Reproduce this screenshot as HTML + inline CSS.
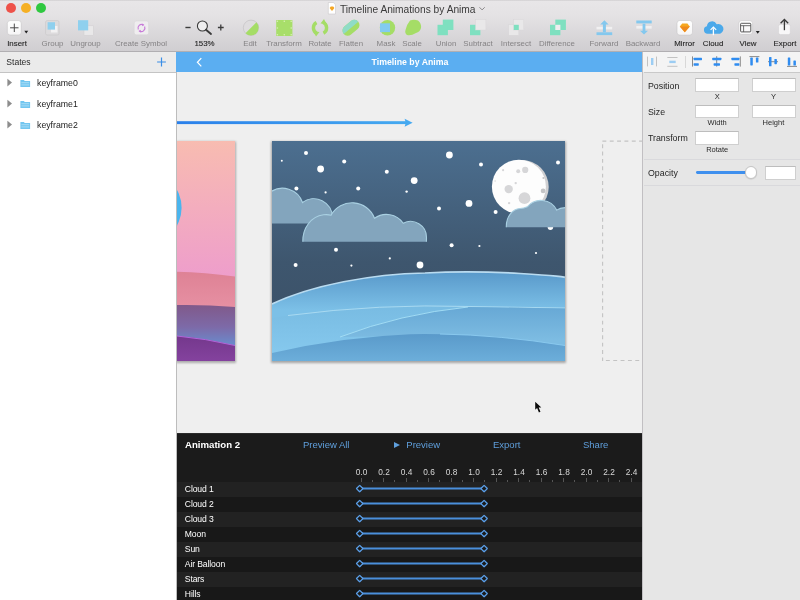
<!DOCTYPE html>
<html lang="en">
<head>
<meta charset="utf-8">
<title>Timeline Animations by Anima</title>
<style>
*{box-sizing:border-box;margin:0;padding:0}
html,body{width:800px;height:600px;overflow:hidden;background:#ececec;font-family:"Liberation Sans",sans-serif;color:#222}
.abs{position:absolute}
#app{position:relative;width:800px;height:600px;overflow:hidden;will-change:transform}
/* toolbar */
#toolbar{position:absolute;left:0;top:0;width:800px;height:52px;background:linear-gradient(#cfcdcf 0,#e8e6e8 1.500px,#e4e2e4 16px,#d0ced1 100%);border-bottom:1px solid #b1afb2}
.tl{position:absolute;top:3.200px;width:10px;height:10px;border-radius:50%}
.tbl{position:absolute;top:37.5px;font-size:7.9px;line-height:12px;color:#858385;white-space:nowrap;transform:translateX(-50%);letter-spacing:0}
.tbl.dk{color:#262626;-webkit-text-stroke:.12px #262626}
#title{position:absolute;top:2.5px;left:340px;font-size:10.2px;line-height:14px;color:#3a3a3a;white-space:nowrap}
/* sidebar */
#side{position:absolute;left:0;top:52px;width:177px;height:548px;background:#fff;border-right:1px solid #bdbdbd}
#sidehead{position:absolute;left:0;top:0;width:176px;height:21px;background:#ebebeb;border-bottom:1px solid #c4c4c4;font-size:8.6px;line-height:20px;padding-left:6.3px;color:#2a2a2a}
.kf{position:absolute;left:37px;font-size:8.75px;line-height:12px;color:#222}
/* canvas */
#canvas{position:absolute;left:177px;top:72px;width:465px;height:361px;z-index:2;background:#efefef;overflow:hidden}
#bluebar{position:absolute;left:176px;top:52px;width:466px;height:20px;background:#5baef1;color:#fff;font-size:8.75px;font-weight:bold;line-height:20px;text-align:center;padding-left:2px}
/* right */
#right{position:absolute;left:642px;top:52px;width:158px;height:548px;background:#e6e6e6;box-shadow:inset 1px 0 0 #c1bfc2}
.rl{position:absolute;left:6px;font-size:8.8px;line-height:12px;color:#1f1f1f}
.rs{position:absolute;font-size:7.5px;line-height:10px;color:#2a2a2a;transform:translateX(-50%)}
.inp{position:absolute;height:13.600px;background:#fff;border:1px solid #cfcfcf;border-top-color:#bdbdbd}
.hr{position:absolute;left:2px;width:158px;height:1px;background:#d9d9dc}
/* timeline */
#tl{position:absolute;left:177px;top:432px;width:465px;height:168px;background:#1b1b1b;overflow:hidden}
.tlb{position:absolute;top:7px;font-size:9.5px;line-height:12px;color:#5f9fdc;white-space:nowrap}
.row{position:absolute;left:0;width:465px;height:15px;font-size:8.6px;letter-spacing:-.12px;line-height:15px;color:#fff;padding-left:7.8px}
.row.a{background:#222}
.row.b{background:#181818}
.num{position:absolute;top:35px;font-size:8.3px;line-height:10px;color:#d8d8d8;transform:translateX(-50%)}
</style>
</head>
<body>
<div id="app">

<!-- TOOLBAR -->
<div id="toolbar">
  <div class="tl" style="left:5.5px;background:#ee5149"></div>
  <div class="tl" style="left:20.5px;background:#f5b025"></div>
  <div class="tl" style="left:35.5px;background:#2fc840"></div>
  <div id="title">Timeline Animations by Anima</div>
  <div class="tbl dk" style="left:17px;">Insert</div>
  <div class="tbl" style="left:52.5px">Group</div>
  <div class="tbl" style="left:85.5px">Ungroup</div>
  <div class="tbl" style="left:141px">Create Symbol</div>
  <div class="tbl dk" style="left:204.5px;">153%</div>
  <div class="tbl" style="left:250px">Edit</div>
  <div class="tbl" style="left:284px">Transform</div>
  <div class="tbl" style="left:320px">Rotate</div>
  <div class="tbl" style="left:351px">Flatten</div>
  <div class="tbl" style="left:386px">Mask</div>
  <div class="tbl" style="left:412px">Scale</div>
  <div class="tbl" style="left:446px">Union</div>
  <div class="tbl" style="left:478px">Subtract</div>
  <div class="tbl" style="left:516px">Intersect</div>
  <div class="tbl" style="left:557px">Difference</div>
  <div class="tbl" style="left:604px">Forward</div>
  <div class="tbl" style="left:643px">Backward</div>
  <div class="tbl dk" style="left:684.5px">Mirror</div>
  <div class="tbl dk" style="left:713px">Cloud</div>
  <div class="tbl dk" style="left:748px">View</div>
  <div class="tbl dk" style="left:785px">Export</div>
  <svg class="abs" style="left:0;top:0" width="800" height="52" viewBox="0 0 800 52">
<defs>
<linearGradient id="btn" x1="0" y1="0" x2="0" y2="1"><stop offset="0" stop-color="#ffffff"/><stop offset="1" stop-color="#f6f5f6"/></linearGradient>
</defs>
<!-- title doc icon + chevron -->
<path d="M328.300 2.500 h5 l2.200 2.200 v9.300 h-7.200 z" fill="#fff" stroke="#c9c7c9" stroke-width=".6"/>
<path d="M329.600 8 l1.200 -1.600 h2.400 l1.200 1.600 l-2.400 3 z" fill="#f5a623"/>
<path d="M479.500 7.300 l2.600 2.600 l2.600 -2.600" fill="none" stroke="#8a888a" stroke-width="1"/>
<!-- insert -->
<rect x="7.300" y="20.600" width="14" height="14.400" rx="2.800" fill="url(#btn)" stroke="#c4c2c4" stroke-width=".6"/>
<path d="M14.300 23.600 v8.400 M10.100 27.800 h8.400" stroke="#4a4a4a" stroke-width="1" fill="none"/>
<path d="M24.300 30.800 h3.900 l-1.950 2.800 z" fill="#222"/>
<!-- group -->
<rect x="45.600" y="20.600" width="13.400" height="14.400" rx="1.500" fill="#dddbdd" stroke="#c8c6c8" stroke-width=".6"/>
<rect x="51" y="26" width="6.500" height="6.500" fill="#f2f1f2"/>
<rect x="47.600" y="22.200" width="7.400" height="7.400" fill="#8fd0ee"/>
<!-- ungroup -->
<rect x="84" y="25.800" width="9.400" height="9.400" fill="#e9e8e9" stroke="#d0ced0" stroke-width=".5"/>
<rect x="78" y="20.200" width="10.200" height="10.200" fill="#8fd0ee"/>
<!-- create symbol -->
<rect x="134.200" y="21" width="14.400" height="13.800" rx="2" fill="#efedef" stroke="#d6d4d6" stroke-width=".5"/>
<path d="M138.300 29.500 a3.600 3.600 0 0 1 5 -4.600 M144.600 26.500 a3.600 3.600 0 0 1 -5 4.600" fill="none" stroke="#c77bd8" stroke-width="1.200"/>
<path d="M142.300 23.600 l2.200 1.500 l-2.300 1.200z M140.600 32.400 l-2.200 -1.500 l2.300 -1.200z" fill="#c77bd8"/>
<!-- zoom -->
<path d="M185.400 27.500 h5.200" stroke="#3c3c3c" stroke-width="1.400"/>
<circle cx="202.400" cy="26" r="5" fill="#efeeef" stroke="#3a3a3a" stroke-width="1.100"/>
<path d="M206 29.800 l5 4.200" stroke="#3a3a3a" stroke-width="1.900" stroke-linecap="round"/>
<path d="M217.900 27.500 h5.800 M220.800 24.600 v5.800" stroke="#3c3c3c" stroke-width="1.300"/>
<!-- edit -->
<circle cx="251" cy="27.800" r="7.700" fill="#dedcde" stroke="#c4c2c4" stroke-width=".7"/>
<path d="M256.400 22.300 A7.700 7.700 0 0 1 245.500 33.200 Z" fill="#a5dd66"/>
<!-- transform -->
<rect x="276.200" y="20" width="16.200" height="16" fill="#a8de6a"/>
<g fill="#d8f0b4"><circle cx="277.400" cy="21.200" r=".8"/><circle cx="284.300" cy="21.200" r=".8"/><circle cx="291.200" cy="21.200" r=".8"/><circle cx="277.400" cy="34.800" r=".8"/><circle cx="284.300" cy="34.800" r=".8"/><circle cx="291.200" cy="34.800" r=".8"/><circle cx="277.400" cy="28" r=".8"/><circle cx="291.200" cy="28" r=".8"/></g>
<!-- rotate -->
<path d="M316.500 22.500 A6.200 6.200 0 0 0 317 33.500" fill="none" stroke="#a5dd66" stroke-width="3.400"/>
<path d="M323.500 33.200 A6.200 6.200 0 0 0 323 22.200" fill="none" stroke="#a5dd66" stroke-width="3.400"/>
<path d="M313.500 31.500 l6 0.500 l-3.500 4.500z M326.500 24 l-6 -0.500 l3.500 -4.500z" fill="#a5dd66"/>
<!-- flatten -->
<g transform="rotate(-40 351 27.800)">
<rect x="341.500" y="22.600" width="19" height="10.400" rx="5.200" fill="#a5dd66"/>
<path d="M346.700 22.600 h8.600 a5.200 5.200 0 0 1 5.200 5.200 h-19 a5.200 5.200 0 0 1 5.200 -5.200z" fill="#8fdcc6"/>
</g>
<!-- mask -->
<circle cx="387.500" cy="27.800" r="7.700" fill="#a5dd66"/>
<rect x="380" y="23.300" width="10" height="8.800" fill="#82cbf0"/>
<!-- scale -->
<path d="M410 20.500 Q414 19 418 20.500 Q421.500 23 421 28 Q420 32 416 33 Q411 36 407 35 Q404.500 33 405.500 30 Q407 24 410 20.500z" fill="#a5dd66"/>
<!-- union -->
<rect x="442.800" y="19.600" width="10.600" height="10.400" fill="#7fe0c0"/><rect x="437.500" y="24.800" width="10.400" height="10.400" fill="#7fe0c0"/>
<!-- subtract -->
<rect x="470" y="24.800" width="10.400" height="10.400" fill="#7fe0c0"/><rect x="475.500" y="19.600" width="10.400" height="10.400" fill="#e9e8e9" stroke="#d6d4d6" stroke-width=".4"/>
<!-- intersect -->
<rect x="508.800" y="24.800" width="10" height="10.400" fill="#e9e8e9" stroke="#d6d4d6" stroke-width=".4"/><rect x="513.800" y="19.600" width="10" height="10.400" fill="#e9e8e9" stroke="#d6d4d6" stroke-width=".4"/><rect x="513.800" y="24.800" width="5" height="5.200" fill="#7fe0c0"/>
<!-- difference -->
<rect x="550" y="24.800" width="10.400" height="10.400" fill="#7fe0c0"/><rect x="555.300" y="19.600" width="10.600" height="10.400" fill="#7fe0c0"/><rect x="555.300" y="24.800" width="5.100" height="5.200" fill="#efeeef"/>
<!-- forward -->
<rect x="596.500" y="32.300" width="15.700" height="2.800" fill="#84c8ee"/>
<rect x="596.500" y="26.800" width="15.700" height="2.600" fill="#f1f0f1"/>
<path d="M604.400 20.300 l4.200 4.200 h-2.700 v7.800 h-3 v-7.800 h-2.700z" fill="#84c8ee"/>
<!-- backward -->
<rect x="636.300" y="20.500" width="15.400" height="2.900" fill="#84c8ee"/>
<rect x="636.300" y="26" width="15.400" height="2.600" fill="#f1f0f1"/>
<path d="M644 34.600 l4 -3.800 h-2.600 v-7 h-2.800 v7 h-2.600z" fill="#84c8ee"/>
<!-- mirror -->
<rect x="677" y="20.500" width="15.500" height="14.600" rx="2.800" fill="url(#btn)" stroke="#c8c6c8" stroke-width=".6"/>
<path d="M679.800 26.500 l2.400 -3 h5.200 l2.400 3 l-5 5.800z" fill="#f6a820"/>
<path d="M679.800 26.500 h10 l-5 5.800z" fill="#ee8a1e"/>
<!-- cloud -->
<path d="M707.500 33.700 a3.800 3.800 0 0 1 -0.600 -7.500 a5.200 5.200 0 0 1 9.800 -2 a4.800 4.800 0 0 1 3.400 9.500z" fill="#4ba9ea"/>
<path d="M713.400 35.200 v-7" stroke="#fff" stroke-width="1.300"/>
<path d="M710.600 29.800 l2.800 -2.800 l2.800 2.800" stroke="#fff" stroke-width="1.200" fill="none"/>
<!-- view -->
<rect x="738.800" y="20.600" width="13.800" height="13.900" rx="2.800" fill="url(#btn)" stroke="#c4c2c4" stroke-width=".6"/>
<rect x="740.600" y="23.300" width="10.200" height="8.600" rx=".8" fill="none" stroke="#4a4a4a" stroke-width=".9"/>
<path d="M740.600 25.700 h10.200 M743.600 25.700 v6.200" stroke="#4a4a4a" stroke-width=".8"/>
<path d="M755.800 31 h3.900 l-1.950 2.800z" fill="#222"/>
<!-- export -->
<rect x="778.600" y="24.400" width="11.700" height="10.200" rx="1.800" fill="#f8f7f8" stroke="#d0ced0" stroke-width=".5"/>
<path d="M784.400 30.200 v-10" stroke="#3a3a3a" stroke-width="1.300"/>
<path d="M780.600 23.300 l3.800 -3.800 l3.800 3.800" stroke="#3a3a3a" stroke-width="1.300" fill="none"/>
</svg>

</div>

<!-- SIDEBAR -->
<div id="side">
  <div id="sidehead">States</div>
  <svg class="abs" style="left:0;top:0" width="176" height="100" viewBox="0 52 176 100">
<path d="M161.500 57.600 v8.800 M157.100 62 h8.800" stroke="#3a8ee6" stroke-width="1.200" fill="none"/>
<g fill="#8c8c8c"><path d="M7.400 78.800 l4.600 3.800 l-4.600 3.800z"/><path d="M7.400 99.800 l4.600 3.800 l-4.600 3.800z"/><path d="M7.400 120.800 l4.600 3.800 l-4.600 3.800z"/></g>
<g fill="#72c6f0">
<path d="M20.400 80 h3.400 l1 1 h5.300 v6 h-9.700z"/><path d="M20.400 101 h3.400 l1 1 h5.300 v6 h-9.700z"/><path d="M20.400 122 h3.400 l1 1 h5.300 v6 h-9.700z"/>
</g>
<g fill="#a9dcf6"><rect x="21.400" y="82.200" width="7.700" height="1"/><rect x="21.400" y="84.400" width="7.700" height="1"/><rect x="21.400" y="103.200" width="7.700" height="1"/><rect x="21.400" y="105.400" width="7.700" height="1"/><rect x="21.400" y="124.200" width="7.700" height="1"/><rect x="21.400" y="126.400" width="7.700" height="1"/></g>
</svg>

  <div class="kf" style="top:25.400px">keyframe0</div>
  <div class="kf" style="top:46.400px">keyframe1</div>
  <div class="kf" style="top:67.400px">keyframe2</div>
</div>

<!-- BLUE BAR -->
<div id="bluebar">Timeline by Anima<svg class="abs" style="left:0;top:0" width="40" height="20" viewBox="176 52 40 20"><path d="M201.300 58.200 L197.400 62.250 L201.300 66.300" fill="none" stroke="#fff" stroke-width="1.200"/></svg></div>

<!-- CANVAS -->
<div id="canvas">
<svg class="abs" style="left:0;top:0" width="465" height="361" viewBox="177 72 465 361">
<defs>
<linearGradient id="sky" x1="0" y1="0" x2="0" y2="1"><stop offset="0" stop-color="#4c6f90"/><stop offset="0.55" stop-color="#3e566e"/><stop offset="1" stop-color="#3a4f65"/></linearGradient>
<linearGradient id="pink" gradientUnits="userSpaceOnUse" x1="0" y1="141" x2="0" y2="276"><stop offset="0" stop-color="#f8bcb1"/><stop offset="1" stop-color="#ee9ecb"/></linearGradient>
<linearGradient id="ph1" gradientUnits="userSpaceOnUse" x1="0" y1="272" x2="0" y2="306"><stop offset="0" stop-color="#de8295"/><stop offset="1" stop-color="#e68fa2"/></linearGradient>
<linearGradient id="ph2" gradientUnits="userSpaceOnUse" x1="0" y1="305" x2="0" y2="345"><stop offset="0" stop-color="#80598a"/><stop offset=".55" stop-color="#7d6aa8"/><stop offset="1" stop-color="#6a8bcc"/></linearGradient><linearGradient id="ph3" gradientUnits="userSpaceOnUse" x1="0" y1="336" x2="0" y2="361"><stop offset="0" stop-color="#74388c"/><stop offset="1" stop-color="#84429e"/></linearGradient>
<linearGradient id="h1" gradientUnits="userSpaceOnUse" x1="0" y1="272" x2="0" y2="310"><stop offset="0" stop-color="#5999ca"/><stop offset="1" stop-color="#7cc0e7"/></linearGradient>
<linearGradient id="h2" gradientUnits="userSpaceOnUse" x1="0" y1="305" x2="0" y2="355"><stop offset="0" stop-color="#78bbe2"/><stop offset="1" stop-color="#86c9ee"/></linearGradient>
<linearGradient id="h3" gradientUnits="userSpaceOnUse" x1="0" y1="334" x2="0" y2="361"><stop offset="0" stop-color="#5a9aca"/><stop offset="1" stop-color="#6caeda"/></linearGradient><linearGradient id="h4" gradientUnits="userSpaceOnUse" x1="0" y1="307" x2="0" y2="340"><stop offset="0" stop-color="#67a8d5"/><stop offset="1" stop-color="#7dbce2"/></linearGradient>
<linearGradient id="arr" x1="0" y1="0" x2="1" y2="0"><stop offset="0" stop-color="#2a80ea"/><stop offset="1" stop-color="#45a9f0"/></linearGradient>
<clipPath id="cm"><rect x="272" y="141" width="293" height="220"/></clipPath>
<clipPath id="cl"><rect x="177" y="141" width="58" height="220"/></clipPath>
<filter id="sh" x="-5%" y="-5%" width="110%" height="112%"><feGaussianBlur stdDeviation="1.2"/></filter>
</defs>
<!-- arrow -->
<rect x="177" y="121.200" width="229" height="2.900" fill="url(#arr)"/>
<path d="M404.600 118.800 L412.600 122.700 L404.600 126.800 L405.800 122.700 Z" fill="#45a9f0"/>
<!-- dashed placeholder -->
<g fill="none" stroke="#c3c3c3" stroke-width="1.100" stroke-dasharray="3.900 3.450"><path d="M602.400 141.100 H650"/><path d="M602.600 144.250 V361"/><path d="M605.900 360.500 H650"/></g>
<!-- left artboard -->
<rect x="176" y="141.5" width="60" height="221.5" fill="#000" opacity=".28" filter="url(#sh)"/>
<g clip-path="url(#cl)">
<rect x="177" y="141" width="58" height="220" fill="url(#pink)"/>
<circle cx="145.300" cy="207.700" r="36.300" fill="#4ab5ee"/>
<path d="M177 271.800 Q205 272.500 235 276.500 L235 361 L177 361 Z" fill="url(#ph1)"/>
<path d="M177 305 Q205 304.500 235 307 L235 361 L177 361 Z" fill="url(#ph2)"/>
<path d="M177 336 Q205 338.500 235 345.500 L235 361 L177 361 Z" fill="url(#ph3)"/>
<path d="M177 336 Q205 338.500 235 345.500" fill="none" stroke="#b264d8" stroke-width="1"/>
</g>
<!-- main artboard -->
<rect x="271" y="141.500" width="295" height="221.500" fill="#000" opacity=".3" filter="url(#sh)"/>
<g clip-path="url(#cm)">
<rect x="272" y="141" width="293" height="220" fill="url(#sky)"/>
<g fill="#fff"><circle cx="306" cy="153" r="2"/><circle cx="281.8" cy="160.8" r="1"/><circle cx="320.6" cy="169" r="3.4"/><circle cx="344.2" cy="161.6" r="2"/><circle cx="386.8" cy="171.8" r="2"/><circle cx="414.2" cy="180.6" r="3.4"/><circle cx="296.4" cy="188.6" r="2"/><circle cx="325.6" cy="192.4" r="1.1"/><circle cx="358.2" cy="188.6" r="2"/><circle cx="406.6" cy="191.6" r="1.2"/><circle cx="336" cy="249.8" r="2"/><circle cx="449.4" cy="155" r="3.4"/><circle cx="481" cy="164.6" r="2"/><circle cx="558" cy="162.4" r="2"/><circle cx="469" cy="203.4" r="3.4"/><circle cx="439" cy="208.6" r="2"/><circle cx="495.6" cy="212" r="2"/><circle cx="451.6" cy="245.2" r="2"/><circle cx="479.4" cy="246" r="1.1"/><circle cx="536" cy="253" r="1.1"/><circle cx="295.6" cy="265" r="2"/><circle cx="351.4" cy="265.6" r="1.1"/><circle cx="389.8" cy="258.4" r="1.1"/><circle cx="420" cy="265" r="3.4"/></g>
<!-- moon -->
<circle cx="521.600" cy="187" r="27.100" fill="#d0d0d2"/>
<circle cx="518.900" cy="186.700" r="27" fill="#fdfdfd"/>
<g fill="#d6d6d8">
<circle cx="525.200" cy="169.900" r="3.100"/><circle cx="518.200" cy="171.200" r="2"/><circle cx="508.700" cy="189.100" r="4.200"/><circle cx="524.500" cy="198.200" r="5.900"/><circle cx="515.700" cy="183.100" r="1.200"/><circle cx="503.100" cy="170.200" r="1.100"/><circle cx="509.100" cy="203.100" r="1.200"/><circle cx="495.100" cy="181" r=".8"/>
</g>
<g fill="#c4c4c6"><circle cx="543.100" cy="190.900" r="2.400"/><circle cx="543.400" cy="177.900" r="1"/></g>
<!-- star behind cloud3 -->
<circle cx="550.400" cy="227.300" r="2.700" fill="#fff"/>
<!-- cloud 1 -->
<path d="M270 192.300 A21.200 21.200 0 0 1 302.500 202.500 A18.750 18.750 0 0 1 332.500 217.500 L332.500 223.500 L270 223.500 Z" fill="#83a5bd"/>
<path d="M270 192.300 A21.200 21.200 0 0 1 302.500 202.500 A18.750 18.750 0 0 1 332.500 217.500 L332.500 223.500" fill="none" stroke="#a9d0e2" stroke-width="1.100"/>
<!-- cloud 2 -->
<path d="M302.800 241.800 C302.500 228 311 216.500 323.500 214.800 Q328 214.300 331 215.300 A24 24 0 0 1 374.500 218.250 A20.400 20.400 0 0 1 403.250 223.200 A16 16 0 0 1 426.500 237.500 L426.400 241.800 Z" fill="#83a5bd"/>
<path d="M302.800 241.800 C302.500 228 311 216.500 323.500 214.800 Q328 214.300 331 215.300 A24 24 0 0 1 374.500 218.250 A20.400 20.400 0 0 1 403.250 223.200 A16 16 0 0 1 426.500 237.500 L426.400 241.800" fill="none" stroke="#a9d0e2" stroke-width="1.100"/>
<!-- cloud 3 -->
<path d="M506.300 227.200 C506 216 513 209 520 208.500 Q524 208.400 527.300 206.800 A17.700 17.700 0 0 1 556.700 210.100 Q560.500 207.500 567 207.600 L567 227.200 Z" fill="#83a5bd"/>
<path d="M506.300 227.200 C506 216 513 209 520 208.500 Q524 208.400 527.300 206.800 A17.700 17.700 0 0 1 556.700 210.100 Q560.500 207.500 567 207.600" fill="none" stroke="#a9d0e2" stroke-width="1.100"/>
<!-- hills -->
<path d="M272 304 C312 285 372 274 425 273 Q470 270.500 520 273.500 T565 278 L565 361 L272 361 Z" fill="url(#h1)"/>
<path d="M272 304 C312 285 372 274 425 273 Q470 270.500 520 273.500 T565 278" fill="none" stroke="#b9dbf0" stroke-width="1.700"/>
<path d="M272 318 Q360 304 470 306.500 Q520 307 565 308 L565 361 L272 361 Z" fill="url(#h2)"/>
<path d="M288 315.500 Q380 303.500 470 306.500 Q520 307.300 565 308" fill="none" stroke="#b4e0f4" stroke-width=".9" opacity=".9"/>
<path d="M340 337 Q400 314 468 307 L565 308.500 L565 346 L415 336 Z" fill="url(#h4)"/>
<path d="M340 337 Q400 314 468 307" fill="none" stroke="#a6e0f6" stroke-width=".9"/>
<path d="M272 353 Q340 337 410 334.200 Q490 333 565 345.500 L565 361 L272 361 Z" fill="url(#h3)"/>
<path d="M440 334 Q500 335 565 345.500" fill="none" stroke="#8cccf0" stroke-width=".9"/>
</g>
</svg>

</div>

<!-- RIGHT PANEL -->
<div id="right">
  <div class="abs" style="left:1px;top:0;width:158px;height:20px;background:#f4f4f4"></div>
<svg class="abs" style="left:1px;top:0" width="158" height="21" viewBox="643 52 158 21">
<g stroke="#c2c2c2" stroke-width="1" fill="none"><path d="M647.500 56.600 v9.800 M656.500 56.600 v9.800 M667.300 57.500 h10.200 M667.300 66.300 h10.200"/><path d="M685.500 56 v12" stroke="#d8d8d8"/></g>
<g fill="#9ccdf3"><rect x="651" y="58" width="2.400" height="7"/><rect x="669.300" y="60.700" width="6.400" height="2.400"/></g>
<g stroke="#8a8a8a" stroke-width="1" fill="none"><path d="M692.500 56.400 v10.200 M716.700 56.200 v10.400 M740.300 56.400 v10.200 M749.400 56.600 h10 M768 61.700 h10 M787 66.400 h10"/></g>
<g fill="#2f8cf0">
<rect x="693.600" y="57.700" width="8.400" height="2.500" rx=".6"/><rect x="693.600" y="63.200" width="5.200" height="2.500" rx=".6"/>
<rect x="712.200" y="57.700" width="9.200" height="2.500" rx=".6"/><rect x="713.600" y="63.200" width="6.400" height="2.500" rx=".6"/>
<rect x="731.400" y="57.700" width="8" height="2.500" rx=".6"/><rect x="734.400" y="63.200" width="5" height="2.500" rx=".6"/>
<rect x="750.300" y="57.600" width="2.500" height="7.800" rx=".6"/><rect x="755.900" y="57.600" width="2.500" height="5" rx=".6"/>
<rect x="769" y="57" width="2.500" height="9.300" rx=".6"/><rect x="774.400" y="59" width="2.500" height="5.200" rx=".6"/>
<rect x="787.800" y="57.500" width="2.500" height="8" rx=".6"/><rect x="793.400" y="60.400" width="2.500" height="5.100" rx=".6"/>
</g>
</svg>

  <div class="hr" style="top:20px;background:#c9c9c9"></div>
  <div class="rl" style="top:28px">Position</div>
  <div class="inp" style="left:53.400px;top:26.400px;width:44px"></div>
  <div class="inp" style="left:109.800px;top:26.400px;width:43.800px"></div>
  <div class="rs" style="left:75.200px;top:40.400px">X</div>
  <div class="rs" style="left:131.400px;top:40.400px">Y</div>
  <div class="rl" style="top:54px">Size</div>
  <div class="inp" style="left:53.400px;top:52.900px;width:44px"></div>
  <div class="inp" style="left:109.800px;top:52.900px;width:43.800px"></div>
  <div class="rs" style="left:75.200px;top:66.400px">Width</div>
  <div class="rs" style="left:131.400px;top:66.400px">Height</div>
  <div class="rl" style="top:80px">Transform</div>
  <div class="inp" style="left:53.400px;top:79.300px;width:44px"></div>
  <div class="rs" style="left:75.200px;top:93px">Rotate</div>
  <div class="hr" style="top:106.500px"></div>
  <div class="rl" style="top:115px">Opacity</div>
  <div class="abs" style="left:54px;top:119px;width:52px;height:2.800px;background:#3f90ee;border-radius:1.400px"></div>
  <div class="abs" style="left:102.800px;top:114.200px;width:12.400px;height:12.400px;border-radius:50%;background:#fff;border:.7px solid #c4c4c4;box-shadow:0 .5px 1px rgba(0,0,0,.15)"></div>
  <div class="inp" style="left:122.500px;top:114px;width:31.300px;height:13.500px"></div>
  <div class="hr" style="top:133px"></div>
</div>

<!-- TIMELINE -->
<div id="tl">
  <div class="abs" style="left:0;top:1px;width:465px;height:1px;background:#2b2b2b"></div>
  <div class="abs" style="left:8px;top:7px;font-size:9.65px;line-height:12px;font-weight:bold;color:#fff">Animation 2</div>
  <div class="tlb" style="left:126px">Preview All</div>
  <div class="abs" style="left:217px;top:9.8px;width:0;height:0;border-left:6px solid #5f9fdc;border-top:3.2px solid transparent;border-bottom:3.2px solid transparent"></div>
  <div class="tlb" style="left:229.300px">Preview</div>
  <div class="tlb" style="left:316px">Export</div>
  <div class="tlb" style="left:406px">Share</div>
  <div class="num" style="left:184.5px">0.0</div>
  <div class="num" style="left:207.0px">0.2</div>
  <div class="num" style="left:229.5px">0.4</div>
  <div class="num" style="left:252.0px">0.6</div>
  <div class="num" style="left:274.5px">0.8</div>
  <div class="num" style="left:297.0px">1.0</div>
  <div class="num" style="left:319.5px">1.2</div>
  <div class="num" style="left:342.0px">1.4</div>
  <div class="num" style="left:364.5px">1.6</div>
  <div class="num" style="left:387.0px">1.8</div>
  <div class="num" style="left:409.5px">2.0</div>
  <div class="num" style="left:432.0px">2.2</div>
  <div class="num" style="left:454.5px">2.4</div>
  <div class="abs" style="left:183.50px;top:45.6px;width:1px;height:4.4px;background:#565656"></div>
  <div class="abs" style="left:194.75px;top:47.6px;width:1px;height:2.4px;background:#565656"></div>
  <div class="abs" style="left:206.00px;top:45.6px;width:1px;height:4.4px;background:#565656"></div>
  <div class="abs" style="left:217.25px;top:47.6px;width:1px;height:2.4px;background:#565656"></div>
  <div class="abs" style="left:228.50px;top:45.6px;width:1px;height:4.4px;background:#565656"></div>
  <div class="abs" style="left:239.75px;top:47.6px;width:1px;height:2.4px;background:#565656"></div>
  <div class="abs" style="left:251.00px;top:45.6px;width:1px;height:4.4px;background:#565656"></div>
  <div class="abs" style="left:262.25px;top:47.6px;width:1px;height:2.4px;background:#565656"></div>
  <div class="abs" style="left:273.50px;top:45.6px;width:1px;height:4.4px;background:#565656"></div>
  <div class="abs" style="left:284.75px;top:47.6px;width:1px;height:2.4px;background:#565656"></div>
  <div class="abs" style="left:296.00px;top:45.6px;width:1px;height:4.4px;background:#565656"></div>
  <div class="abs" style="left:307.25px;top:47.6px;width:1px;height:2.4px;background:#565656"></div>
  <div class="abs" style="left:318.50px;top:45.6px;width:1px;height:4.4px;background:#565656"></div>
  <div class="abs" style="left:329.75px;top:47.6px;width:1px;height:2.4px;background:#565656"></div>
  <div class="abs" style="left:341.00px;top:45.6px;width:1px;height:4.4px;background:#565656"></div>
  <div class="abs" style="left:352.25px;top:47.6px;width:1px;height:2.4px;background:#565656"></div>
  <div class="abs" style="left:363.50px;top:45.6px;width:1px;height:4.4px;background:#565656"></div>
  <div class="abs" style="left:374.75px;top:47.6px;width:1px;height:2.4px;background:#565656"></div>
  <div class="abs" style="left:386.00px;top:45.6px;width:1px;height:4.4px;background:#565656"></div>
  <div class="abs" style="left:397.25px;top:47.6px;width:1px;height:2.4px;background:#565656"></div>
  <div class="abs" style="left:408.50px;top:45.6px;width:1px;height:4.4px;background:#565656"></div>
  <div class="abs" style="left:419.75px;top:47.6px;width:1px;height:2.4px;background:#565656"></div>
  <div class="abs" style="left:431.00px;top:45.6px;width:1px;height:4.4px;background:#565656"></div>
  <div class="abs" style="left:442.25px;top:47.6px;width:1px;height:2.4px;background:#565656"></div>
  <div class="abs" style="left:453.50px;top:45.6px;width:1px;height:4.4px;background:#565656"></div>
  <div class="abs" style="left:464.75px;top:47.6px;width:1px;height:2.4px;background:#565656"></div>
  <div class="row a" style="top:49.6px">Cloud 1</div>
  <div class="row b" style="top:64.6px">Cloud 2</div>
  <div class="row a" style="top:79.6px">Cloud 3</div>
  <div class="row b" style="top:94.6px">Moon</div>
  <div class="row a" style="top:109.6px">Sun</div>
  <div class="row b" style="top:124.6px">Air Balloon</div>
  <div class="row a" style="top:139.6px">Stars</div>
  <div class="row b" style="top:154.6px">Hills</div>
  <svg class="abs" style="left:0;top:0" width="464" height="168" viewBox="0 0 464 168"><line x1="184" y1="56.6" x2="306" y2="56.6" stroke="#4a8fdc" stroke-width="2"/><rect x="180.39999999999998" y="54.300000000000004" width="4.6" height="4.6" rx=".4" transform="rotate(45 182.7 56.6)" fill="#1b1b1b" stroke="#5b9fe8" stroke-width="1.35"/><rect x="304.8" y="54.300000000000004" width="4.6" height="4.6" rx=".4" transform="rotate(45 307.1 56.6)" fill="#1b1b1b" stroke="#5b9fe8" stroke-width="1.35"/><line x1="184" y1="71.6" x2="306" y2="71.6" stroke="#4a8fdc" stroke-width="2"/><rect x="180.39999999999998" y="69.3" width="4.6" height="4.6" rx=".4" transform="rotate(45 182.7 71.6)" fill="#1b1b1b" stroke="#5b9fe8" stroke-width="1.35"/><rect x="304.8" y="69.3" width="4.6" height="4.6" rx=".4" transform="rotate(45 307.1 71.6)" fill="#1b1b1b" stroke="#5b9fe8" stroke-width="1.35"/><line x1="184" y1="86.6" x2="306" y2="86.6" stroke="#4a8fdc" stroke-width="2"/><rect x="180.39999999999998" y="84.3" width="4.6" height="4.6" rx=".4" transform="rotate(45 182.7 86.6)" fill="#1b1b1b" stroke="#5b9fe8" stroke-width="1.35"/><rect x="304.8" y="84.3" width="4.6" height="4.6" rx=".4" transform="rotate(45 307.1 86.6)" fill="#1b1b1b" stroke="#5b9fe8" stroke-width="1.35"/><line x1="184" y1="101.6" x2="306" y2="101.6" stroke="#4a8fdc" stroke-width="2"/><rect x="180.39999999999998" y="99.3" width="4.6" height="4.6" rx=".4" transform="rotate(45 182.7 101.6)" fill="#1b1b1b" stroke="#5b9fe8" stroke-width="1.35"/><rect x="304.8" y="99.3" width="4.6" height="4.6" rx=".4" transform="rotate(45 307.1 101.6)" fill="#1b1b1b" stroke="#5b9fe8" stroke-width="1.35"/><line x1="184" y1="116.6" x2="306" y2="116.6" stroke="#4a8fdc" stroke-width="2"/><rect x="180.39999999999998" y="114.3" width="4.6" height="4.6" rx=".4" transform="rotate(45 182.7 116.6)" fill="#1b1b1b" stroke="#5b9fe8" stroke-width="1.35"/><rect x="304.8" y="114.3" width="4.6" height="4.6" rx=".4" transform="rotate(45 307.1 116.6)" fill="#1b1b1b" stroke="#5b9fe8" stroke-width="1.35"/><line x1="184" y1="131.6" x2="306" y2="131.6" stroke="#4a8fdc" stroke-width="2"/><rect x="180.39999999999998" y="129.29999999999998" width="4.6" height="4.6" rx=".4" transform="rotate(45 182.7 131.6)" fill="#1b1b1b" stroke="#5b9fe8" stroke-width="1.35"/><rect x="304.8" y="129.29999999999998" width="4.6" height="4.6" rx=".4" transform="rotate(45 307.1 131.6)" fill="#1b1b1b" stroke="#5b9fe8" stroke-width="1.35"/><line x1="184" y1="146.6" x2="306" y2="146.6" stroke="#4a8fdc" stroke-width="2"/><rect x="180.39999999999998" y="144.29999999999998" width="4.6" height="4.6" rx=".4" transform="rotate(45 182.7 146.6)" fill="#1b1b1b" stroke="#5b9fe8" stroke-width="1.35"/><rect x="304.8" y="144.29999999999998" width="4.6" height="4.6" rx=".4" transform="rotate(45 307.1 146.6)" fill="#1b1b1b" stroke="#5b9fe8" stroke-width="1.35"/><line x1="184" y1="161.6" x2="306" y2="161.6" stroke="#4a8fdc" stroke-width="2"/><rect x="180.39999999999998" y="159.29999999999998" width="4.6" height="4.6" rx=".4" transform="rotate(45 182.7 161.6)" fill="#1b1b1b" stroke="#5b9fe8" stroke-width="1.35"/><rect x="304.8" y="159.29999999999998" width="4.6" height="4.6" rx=".4" transform="rotate(45 307.1 161.6)" fill="#1b1b1b" stroke="#5b9fe8" stroke-width="1.35"/></svg>
</div>

<svg class="abs" style="left:530px;top:398px;z-index:5" width="16" height="18" viewBox="530 398 16 18">
<path d="M535.200 401.800 L535.200 409.700 L537.100 408.100 L538.900 412.400 L540.500 411.700 L538.700 407.500 L541.400 407.400 Z" fill="#0c0c0c" stroke="#fff" stroke-width=".8" stroke-linejoin="round" paint-order="stroke"/>
</svg>

</div>
</body>
</html>
